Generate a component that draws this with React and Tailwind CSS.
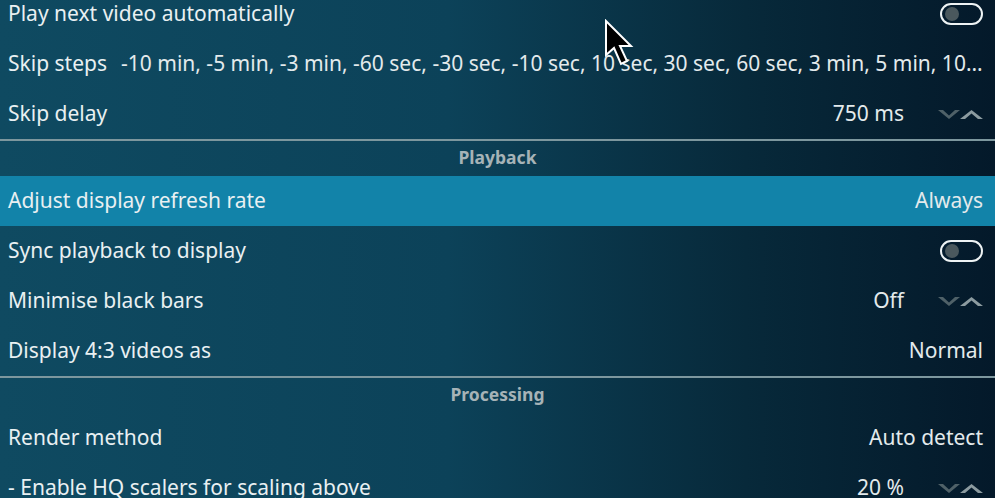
import React from "react";

const font = { fontFamily: '"Noto Sans", "Open Sans", sans-serif' };

function Spinner() {
  return (
    <svg width="46" height="14" viewBox="0 0 46 14" className="ml-[33px]">
      <path d="M1 3 L6 3 L12 8.5 L18 3 L23 3 L12 12 Z" fill="#4f6168" />
      <path d="M23 12 L28 12 L34.5 6.5 L41 12 L46 12 L34.5 3 Z" fill="#8c9ba0" />
    </svg>
  );
}

function Toggle() {
  return (
    <div className="w-[43px] h-[22px] rounded-full border-2 border-[#eef3f4] flex items-center pl-[3px]">
      <div className="w-[14px] h-[14px] rounded-full bg-[#4a585d]" />
    </div>
  );
}

function Row({ label, value, spinner, toggle, active }) {
  return (
    <div
      className={`h-[50px] flex items-center justify-between pl-2 pr-[12px] text-[21px] ${
        active ? "bg-[#1283a9]" : ""
      }`}
    >
      <span className="text-[#e9f0f2] whitespace-nowrap">{label}</span>
      <div className="flex items-center">
        {value && <span className="text-[#e3eaec] whitespace-nowrap">{value}</span>}
        {spinner && <Spinner />}
        {toggle && <Toggle />}
      </div>
    </div>
  );
}

function Header({ title }) {
  return (
    <div className="h-[37px] border-t-2 border-[#7d979e] flex items-center justify-center pb-[2px]">
      <span className="text-[17.5px] font-bold text-[#a6b3b7]">{title}</span>
    </div>
  );
}

export default function App() {
  return (
    <div
      className="relative w-[995px] h-[498px] overflow-hidden bg-[linear-gradient(90deg,#0f4a61_0%,#0c4259_45%,#07293a_75%,#04192a_100%)]"
      style={font}
    >
      <div className="mt-[-11px]">
        <Row label="Play next video automatically" toggle />
        <div className="h-[50px] flex items-center pl-2 pr-[8px] text-[21px] text-[#e9f0f2]">
          <span className="shrink-0">Skip steps</span>
          <span className="ml-[14px] truncate text-[#e3eaec]">
            -10 min, -5 min, -3 min, -60 sec, -30 sec, -10 sec, 10 sec, 30 sec, 60 sec, 3 min, 5 min, 10 min
          </span>
        </div>
        <Row label="Skip delay" value="750 ms" spinner />
        <Header title="Playback" />
        <Row label="Adjust display refresh rate" value="Always" active />
        <Row label="Sync playback to display" toggle />
        <Row label="Minimise black bars" value="Off" spinner />
        <Row label="Display 4:3 videos as" value="Normal" />
        <Header title="Processing" />
        <Row label="Render method" value="Auto detect" />
        <Row label="- Enable HQ scalers for scaling above" value="20 %" spinner />
      </div>

      {/* mouse pointer */}
      <svg
        className="absolute left-[604px] top-[19px]"
        width="34"
        height="50"
        viewBox="0 0 34 50"
      >
        <path
          d="M2 2 L2 36 L10 29 L17 45 L23 42 L16 27 L27 27 Z"
          fill="#000"
          stroke="#fff"
          strokeWidth="2"
          strokeLinejoin="miter"
        />
      </svg>
    </div>
  );
}
